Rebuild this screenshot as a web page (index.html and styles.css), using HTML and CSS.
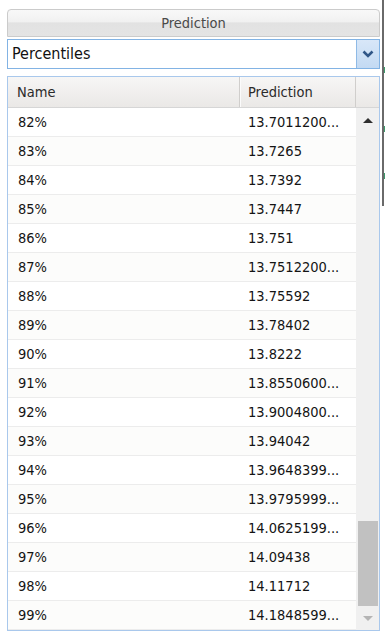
FILE: index.html
```html
<!DOCTYPE html>
<html lang="en">
<head>
    <meta charset="UTF-8">
    <title>Prediction</title>
    <link rel="stylesheet" href="styles.css">
</head>
<body>
    <div class="edge">
        <span class="edge-mark m1"></span>
        <span class="edge-mark m2"></span>
        <span class="edge-mark m3"></span>
    </div>
    <div class="panel">
        <div class="title-bar">Prediction</div>
        <div class="combo">
            <span class="combo-text">Percentiles</span>
            <span class="combo-btn">
                <svg width="12" height="8" viewBox="0 0 12 8"><path d="M1.5 1.5 L6 6 L10.5 1.5" fill="none" stroke="#2f5687" stroke-width="2.6"/></svg>
            </span>
        </div>
        <div class="grid">
            <div class="grid-head">
                <div class="col-name">Name</div>
                <div class="col-pred">Prediction</div>
                <div class="col-pad"></div>
            </div>
            <div class="grid-body">
                <div class="rows">
                    <div class="row"><span class="col-name">82%</span><span class="col-pred">13.7011200...</span></div>
                    <div class="row"><span class="col-name">83%</span><span class="col-pred">13.7265</span></div>
                    <div class="row"><span class="col-name">84%</span><span class="col-pred">13.7392</span></div>
                    <div class="row"><span class="col-name">85%</span><span class="col-pred">13.7447</span></div>
                    <div class="row"><span class="col-name">86%</span><span class="col-pred">13.751</span></div>
                    <div class="row"><span class="col-name">87%</span><span class="col-pred">13.7512200...</span></div>
                    <div class="row"><span class="col-name">88%</span><span class="col-pred">13.75592</span></div>
                    <div class="row"><span class="col-name">89%</span><span class="col-pred">13.78402</span></div>
                    <div class="row"><span class="col-name">90%</span><span class="col-pred">13.8222</span></div>
                    <div class="row"><span class="col-name">91%</span><span class="col-pred">13.8550600...</span></div>
                    <div class="row"><span class="col-name">92%</span><span class="col-pred">13.9004800...</span></div>
                    <div class="row"><span class="col-name">93%</span><span class="col-pred">13.94042</span></div>
                    <div class="row"><span class="col-name">94%</span><span class="col-pred">13.9648399...</span></div>
                    <div class="row"><span class="col-name">95%</span><span class="col-pred">13.9795999...</span></div>
                    <div class="row"><span class="col-name">96%</span><span class="col-pred">14.0625199...</span></div>
                    <div class="row"><span class="col-name">97%</span><span class="col-pred">14.09438</span></div>
                    <div class="row"><span class="col-name">98%</span><span class="col-pred">14.11712</span></div>
                    <div class="row"><span class="col-name">99%</span><span class="col-pred">14.1848599...</span></div>
                </div>
                <div class="scrollbar">
                    <div class="arrow up"></div>
                    <div class="track"><div class="thumb"></div></div>
                    <div class="arrow down"></div>
                </div>
            </div>
        </div>
    </div>
</body>
</html>
```

FILE: styles.css
```css
body {
    margin: 0;
    padding: 0;
    background-color: #ffffff;
    font-family: "DejaVu Sans Condensed", "DejaVu Sans", sans-serif;
    font-stretch: condensed;
    color: #141414;
}
.edge {
    position: absolute;
    left: 382px;
    top: 0;
    width: 2px;
    height: 206px;
    background-color: #6a6a6a;
}
.edge-mark {
    position: absolute;
    left: 2px;
    width: 1px;
    height: 6px;
    background-color: #3c9a6a;
}
.m1 { top: 67px; }
.m2 { top: 126px; }
.m3 { top: 173px; }
.panel {
    width: 373px;
    margin-left: 7px;
    padding-top: 9px;
}
.title-bar {
    height: 26px;
    border: 1px solid #cbcbcb;
    border-radius: 4px 4px 0 0;
    background: linear-gradient(to bottom, #f8f8f8 0%, #f1f1f1 45%, #e2e2e2 50%, #e4e4e4 100%);
    color: #4a4a4a;
    font-size: 14.5px;
    line-height: 26px;
    text-align: center;
}
.combo {
    display: flex;
    height: 28px;
    margin-top: 2px;
    border: 1px solid #82b3e4;
    background-color: #ffffff;
}
.combo-text {
    flex-grow: 1;
    padding-left: 4px;
    font-size: 16px;
    line-height: 28px;
    color: #111111;
}
.combo-btn {
    width: 22px;
    display: flex;
    justify-content: center;
    align-items: center;
    background: linear-gradient(to bottom, #d8e7f8, #c3daf3);
    border-left: 1px solid #8fbae6;
}
.grid {
    margin-top: 7px;
    border: 1px solid #a9c8ec;
    font-size: 14.5px;
}
.grid-head {
    display: flex;
    height: 30px;
    border-bottom: 1px solid #d6d6d6;
    background: linear-gradient(to bottom, #f7f6f5, #eae8e6);
    color: #2a2a2a;
    line-height: 30px;
}
.grid-head .col-name {
    border-right: 1px solid #d0cecc;
    box-shadow: 1px 0 0 #fbfbfb;
}
.grid-head .col-pred {
    border-right: 1px solid #d0cecc;
}
.col-name {
    width: 222px;
    padding-left: 9px;
}
.col-pred {
    width: 107px;
    padding-left: 8px;
}
.col-pad {
    flex-grow: 1;
}
.grid-body {
    display: flex;
}
.rows {
    width: 348px;
}
.row {
    display: flex;
    height: 28px;
    line-height: 28px;
    border-bottom: 1px solid #ececec;
    background-color: #ffffff;
}
.row:nth-child(even) {
    background-color: #fcfcfb;
}
.row .col-name {
    padding-left: 10px;
    width: 221px;
}
.row .col-pred {
    padding-left: 9px;
}
.scrollbar {
    flex-grow: 1;
    display: flex;
    flex-direction: column;
    background-color: #f0f0f0;
}
.arrow {
    height: 24px;
    display: flex;
    justify-content: center;
    align-items: center;
}
.arrow.up::before {
    content: "";
    border-left: 5px solid transparent;
    border-right: 5px solid transparent;
    border-bottom: 5px solid #2e2e2e;
}
.arrow.down::before {
    content: "";
    border-left: 5px solid transparent;
    border-right: 5px solid transparent;
    border-top: 5px solid #b4b4b4;
}
.track {
    flex-grow: 1;
    display: flex;
    flex-direction: column;
    justify-content: flex-end;
    padding: 0 1px 0 2px;
}
.thumb {
    height: 85px;
    background-color: #c1c1c1;
}
```
